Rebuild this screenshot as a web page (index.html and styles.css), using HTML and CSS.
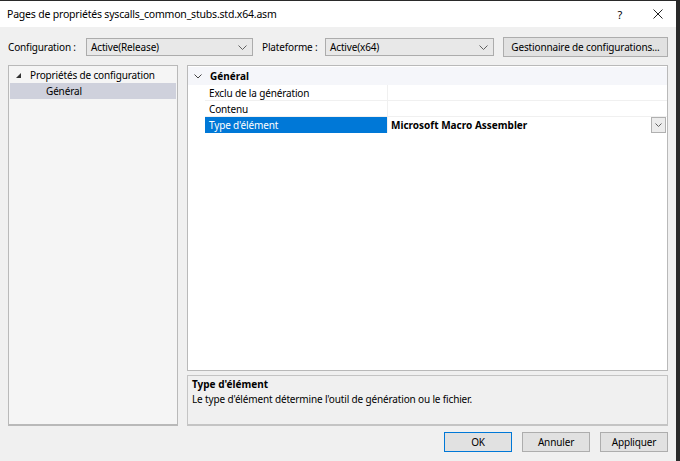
FILE: index.html
```html
<!DOCTYPE html>
<html lang="fr">
<head>
    <meta charset="UTF-8">
    <title>Pages de propriétés</title>
    <link rel="stylesheet" href="styles.css">
</head>
<body>
    <div class="window">
        <div class="titlebar">
            <span class="title">Pages de propriétés syscalls_common_stubs.std.x64.asm</span>
            <div class="controls">
                <span class="help">?</span>
                <svg class="close" width="10" height="10" viewBox="0 0 10 10">
                    <path d="M0.5 0.5 L9.5 9.5 M9.5 0.5 L0.5 9.5" stroke="#222" stroke-width="1" fill="none"/>
                </svg>
            </div>
        </div>

        <div class="content">
            <div class="toolbar">
                <label class="field-label">Configuration :</label>
                <div class="select select-config">
                    <span>Active(Release)</span>
                    <svg width="9" height="5" viewBox="0 0 9 5"><path d="M0.5 0.5 L4.5 4.5 L8.5 0.5" stroke="#606060" fill="none"/></svg>
                </div>
                <label class="field-label label-platform">Plateforme :</label>
                <div class="select select-platform">
                    <span>Active(x64)</span>
                    <svg width="9" height="5" viewBox="0 0 9 5"><path d="M0.5 0.5 L4.5 4.5 L8.5 0.5" stroke="#606060" fill="none"/></svg>
                </div>
                <button class="btn btn-manager">Gestionnaire de configurations...</button>
            </div>

            <div class="main">
                <div class="tree">
                    <div class="tree-item">
                        <svg class="tree-arrow" width="5" height="5" viewBox="0 0 5 5"><path d="M5 0 L5 5 L0 5 Z" fill="#333"/></svg>
                        <span>Propriétés de configuration</span>
                    </div>
                    <div class="tree-item tree-child selected">Général</div>
                </div>

                <div class="right">
                    <div class="grid">
                        <div class="grid-category">
                            <svg class="cat-arrow" width="8" height="5" viewBox="0 0 8 5"><path d="M0.5 0.5 L4 4 L7.5 0.5" stroke="#444" fill="none"/></svg>
                            <span>Général</span>
                        </div>
                        <div class="grid-row">
                            <div class="cell-name">Exclu de la génération</div>
                            <div class="cell-value"></div>
                        </div>
                        <div class="grid-row">
                            <div class="cell-name">Contenu</div>
                            <div class="cell-value"></div>
                        </div>
                        <div class="grid-row active">
                            <div class="cell-name">Type d'élément</div>
                            <div class="cell-value">
                                <b>Microsoft Macro Assembler</b>
                                <span class="drop">
                                    <svg width="7" height="4" viewBox="0 0 7 4"><path d="M0.5 0.5 L3.5 3.5 L6.5 0.5" stroke="#606060" fill="none"/></svg>
                                </span>
                            </div>
                        </div>
                    </div>
                    <div class="desc">
                        <div class="desc-title">Type d'élément</div>
                        <div class="desc-text">Le type d'élément détermine l'outil de génération ou le fichier.</div>
                    </div>
                </div>
            </div>

            <div class="footer">
                <button class="btn btn-ok">OK</button>
                <button class="btn">Annuler</button>
                <button class="btn">Appliquer</button>
            </div>
        </div>
    </div>
</body>
</html>
```

FILE: styles.css
```css
body {
    margin: 0;
    background-color: #2a2a2a;
    font-family: 'Noto Sans', sans-serif;
    font-size: 10px;
    letter-spacing: -0.15px;
    color: #000;
}
.window {
    width: 676px;
    height: 460px;
    margin-top: 1px;
    background-color: #f0f0f0;
    display: flex;
    flex-direction: column;
}
.titlebar {
    height: 26px;
    background-color: #fff;
    display: flex;
    align-items: center;
    justify-content: space-between;
    padding-left: 7px;
}
.title {
    font-size: 10.5px;
    letter-spacing: -0.2px;
}
.controls {
    display: flex;
    align-items: center;
}
.help {
    font-size: 11px;
    margin-right: 31px;
}
.close {
    margin-right: 13px;
}
.content {
    padding: 10px 8px 0 8px;
    display: flex;
    flex-direction: column;
}
.toolbar {
    display: flex;
    align-items: center;
    height: 20px;
}
.field-label {
    width: 78px;
    white-space: nowrap;
}
.label-platform {
    width: 63px;
    margin-left: 9px;
}
.select {
    height: 18px;
    width: 167px;
    box-sizing: border-box;
    border: 1px solid #acacac;
    background-color: #e8e8e8;
    display: flex;
    align-items: center;
    justify-content: space-between;
    padding: 0 5px 0 4px;
}
.select-platform {
    width: 169px;
}
.btn {
    font-family: inherit;
    font-size: inherit;
    letter-spacing: inherit;
    color: #000;
    background-color: #e1e1e1;
    border: 1px solid #adadad;
    padding: 0;
    margin: 0;
}
.btn-manager {
    margin-left: 9px;
    width: 165px;
    height: 20px;
}
.main {
    margin-top: 8px;
    display: flex;
    height: 361px;
}
.tree {
    width: 170px;
    box-sizing: border-box;
    background-color: #f5f5f5;
    border: 1px solid #b9b9b9;
    border-bottom-width: 2px;
    padding: 1px 1px;
}
.tree-item {
    height: 16px;
    display: flex;
    align-items: center;
    padding-left: 6px;
}
.tree-arrow {
    margin-right: 9px;
}
.tree-child {
    padding-left: 36px;
}
.selected {
    background-color: #cfd1dc;
}
.right {
    margin-left: 9px;
    width: 481px;
    display: flex;
    flex-direction: column;
}
.grid {
    height: 306px;
    box-sizing: border-box;
    background-color: #fff;
    border: 1px solid #b9b9b9;
    padding-top: 1px;
}
.grid-category {
    height: 18px;
    display: flex;
    align-items: center;
    background-color: #f5f6fa;
    font-weight: 700;
    letter-spacing: 0;
    padding-left: 6px;
}
.cat-arrow {
    margin-right: 8px;
}
.grid-row {
    height: 16px;
    box-sizing: border-box;
    display: flex;
    border-bottom: 1px solid #f0f0f0;
    margin-left: 17px;
}
.grid-row:last-child {
    border-bottom: none;
}
.cell-name {
    width: 183px;
    padding-left: 4px;
    border-right: 1px solid #f0f0f0;
    display: flex;
    align-items: center;
    box-sizing: border-box;
}
.cell-value {
    flex: 1;
    display: flex;
    align-items: center;
    justify-content: space-between;
    padding-left: 3px;
    padding-right: 1px;
    letter-spacing: 0;
}
.active .cell-name {
    background-color: #0078d7;
    color: #fff;
}
.drop {
    width: 13px;
    height: 14px;
    border: 1px solid #b0b0b0;
    background-color: #ececec;
    display: flex;
    align-items: center;
    justify-content: center;
}
.desc {
    margin-top: 4px;
    height: 51px;
    box-sizing: border-box;
    border: 1px solid #c4c4c4;
    border-bottom-width: 2px;
    padding: 1px 4px;
}
.desc-title {
    font-weight: 700;
    letter-spacing: 0;
}
.desc-text {
    margin-top: 1px;
}
.footer {
    margin-top: 6px;
    display: flex;
    justify-content: flex-end;
    gap: 10px;
}
.footer .btn {
    width: 68px;
    height: 20px;
}
.footer .btn-ok {
    border-color: #0078d7;
}
```
